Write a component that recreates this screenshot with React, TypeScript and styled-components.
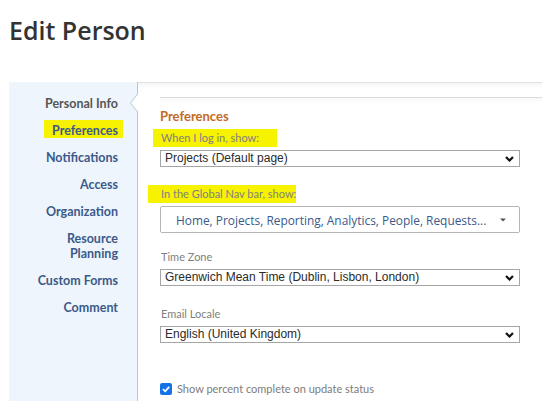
import React from 'react';
import styled, { createGlobalStyle, css } from 'styled-components';

const GlobalStyle = createGlobalStyle`
  html, body {
    margin: 0;
    padding: 0;
    background: #fff;
  }
  body {
    font-family: Lato, "Open Sans", sans-serif;
  }
`;

const Page = styled.div`
  width: 542px;
  height: 401px;
  overflow: hidden;
`;

const Title = styled.h1`
  margin: 0 0 35px;
  padding: 13px 0 0 9px;
  font: 600 25px/34px "Open Sans", sans-serif;
  color: #333;
`;

const Body = styled.div`
  display: flex;
  margin-left: 9px;
  height: 319px;
`;

const Sidebar = styled.nav`
  width: 128px;
  flex-shrink: 0;
  background: #eef5fc;
  border-right: 1px solid #b7c7d8;
  padding-top: 13.5px;
  display: flex;
  flex-direction: column;
  gap: 12px;
`;

const NavItem = styled.div<{ $active?: boolean }>`
  position: relative;
  padding-right: 19px;
  text-align: right;
  font: 700 12.5px/15px Lato, sans-serif;
  color: ${p => (p.$active ? '#555' : '#3b5a8a')};

  ${p =>
    p.$active &&
    css`
      &::before,
      &::after {
        content: '';
        position: absolute;
        top: 50%;
        margin-top: -10px;
        border-top: 10px solid transparent;
        border-bottom: 10px solid transparent;
      }
      &::before {
        right: -1px;
        border-right: 8px solid #b7c7d8;
      }
      &::after {
        right: -2px;
        border-right: 8px solid #fff;
      }
    `}
`;

// yellow highlighter stroke; text keeps its place, the marker bleeds out
const Marker = styled.span<{ $pad: [number, number, number, number] }>`
  display: inline-block;
  background: #f7f200;
  padding: ${p => p.$pad.map(v => `${v}px`).join(' ')};
  margin: ${p => p.$pad.map(v => `${-v}px`).join(' ')};
`;

const Main = styled.main`
  flex: 1;
  border-top: 1px solid #e3e3e3;
  box-shadow: inset 0 4px 4px -2px rgba(0, 0, 0, 0.05);
  padding: 14px 0 0 22px;
`;

const Section = styled.section`
  border-top: 1px solid #dcdcdc;
  padding: 10px 22px 0 0;
  background: linear-gradient(#f8f8f8, #fff 5px);
`;

const Heading = styled.h2`
  margin: 0 0 5px;
  font: 700 13px/16px Lato, sans-serif;
  color: #c46a24;
`;

const Field = styled.div<{ $after?: number }>`
  margin-bottom: ${p => p.$after ?? 18}px;
`;

const Label = styled.div`
  padding-left: 1px;
  margin-bottom: 3px;
  font: 400 11px/18px Lato, sans-serif;
  color: #808080;
`;

const Select = styled.div`
  box-sizing: border-box;
  height: 17px;
  display: flex;
  align-items: center;
  justify-content: space-between;
  padding: 0 5px 0 4px;
  border: 1px solid #a6a6a6;
  font: 12px/15px "Liberation Sans", Arial, sans-serif;
  color: #2a2a2a;
  white-space: nowrap;
`;

const Multi = styled.div`
  box-sizing: border-box;
  height: 27px;
  display: flex;
  align-items: center;
  justify-content: space-between;
  padding: 0 13px 0 15px;
  border: 1px solid #b5b5b5;
  border-radius: 2px;
  font: 11.9px/16px "Open Sans", sans-serif;
  color: #3a5a8c;
  white-space: nowrap;
`;

const CheckRow = styled.label`
  display: flex;
  align-items: center;
  gap: 5px;
  margin-top: 39px;
  font: 400 11px/14px Lato, sans-serif;
  color: #7c7c7c;
`;

const Box = styled.span`
  width: 12px;
  height: 12px;
  border-radius: 2px;
  background: #1473e6;
  display: flex;
  align-items: center;
  justify-content: center;
`;

const Chevron = () => (
  <svg width="9" height="6" viewBox="0 0 9 6">
    <polyline points="1,1 4.5,4.5 8,1" fill="none" stroke="#111" strokeWidth="2.2" />
  </svg>
);

const Caret = () => (
  <svg width="6" height="4" viewBox="0 0 6 4">
    <polygon points="0,0.5 6,0.5 3,3.5" fill="#555" />
  </svg>
);

const Check = () => (
  <svg width="10" height="10" viewBox="0 0 10 10">
    <polyline points="2,5.2 4.2,7.3 8.2,2.8" fill="none" stroke="#fff" strokeWidth="1.8" />
  </svg>
);

const navItems = [
  'Personal Info',
  'Preferences',
  'Notifications',
  'Access',
  'Organization',
  'Resource\nPlanning',
  'Custom Forms',
  'Comment',
];

const App: React.FC = () => (
  <Page>
    <GlobalStyle />
    <Title>Edit Person</Title>
    <Body>
      <Sidebar>
        {navItems.map((item, i) => (
          <NavItem key={item} $active={i === 0}>
            {item === 'Preferences' ? (
              <Marker $pad={[3, 5, 0, 8]}>{item}</Marker>
            ) : (
              item.split('\n').map(line => <div key={line}>{line}</div>)
            )}
          </NavItem>
        ))}
      </Sidebar>
      <Main>
        <Section>
          <Heading>Preferences</Heading>
          <Field>
            <Label>
              <Marker $pad={[0, 18, 0, 8]}>When I log in, show:</Marker>
            </Label>
            <Select>
              Projects (Default page)
              <Chevron />
            </Select>
          </Field>
          <Field $after={15}>
            <Label>
              <Marker $pad={[0, 0, 0, 13]}>In the Global Nav bar, show:</Marker>
            </Label>
            <Multi>
              Home, Projects, Reporting, Analytics, People, Requests...
              <Caret />
            </Multi>
          </Field>
          <Field $after={19}>
            <Label>Time Zone</Label>
            <Select>
              Greenwich Mean Time (Dublin, Lisbon, London)
              <Chevron />
            </Select>
          </Field>
          <Field $after={0}>
            <Label>Email Locale</Label>
            <Select>
              English (United Kingdom)
              <Chevron />
            </Select>
          </Field>
          <CheckRow>
            <Box>
              <Check />
            </Box>
            Show percent complete on update status
          </CheckRow>
        </Section>
      </Main>
    </Body>
  </Page>
);

export default App;
